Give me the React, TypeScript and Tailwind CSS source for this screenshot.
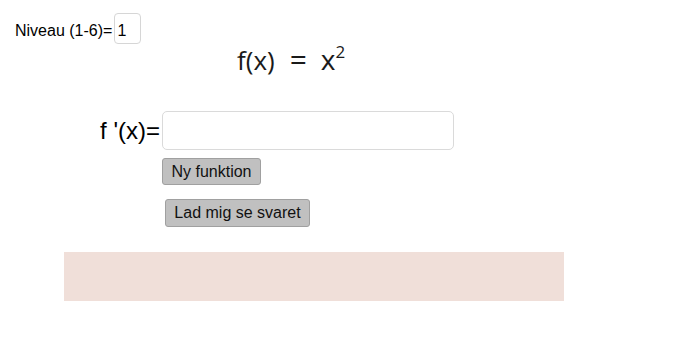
import React from 'react';

// Øvelse: differentiér f(x) og skriv svaret
export default function App() {
  return (
    <div className="w-[700px] h-[350px] overflow-hidden bg-white text-black font-['Liberation_Sans',Arial,sans-serif]">
      {/* niveau */}
      <div className="mt-[13px] h-[31px] flex items-baseline pl-[15px] text-[16px] leading-[18px]">
        <span>Niveau (1-6)=</span>
        <div className="ml-[2px] h-[31px] w-[27px] border border-[#d6d6d6] rounded-[4px] pt-[8px] px-[2px]">1</div>
      </div>

      {/* funktion */}
      <div className="h-[30px] pl-[237px] text-[26px] leading-[30px] whitespace-nowrap font-['Open_Sans','DejaVu_Sans',sans-serif] font-normal text-[#1a1a1a]">
        <span>f(x)</span>
        <span className="inline-block ml-[15px] mr-[14px] text-[30px] leading-[30px]">=</span>
        <span className="text-[28px]">x</span>
        <span className="relative -top-[12px] text-[17px]">2</span>
      </div>

      {/* svar */}
      <div className="mt-[37px] h-[39px] flex items-center">
        <div className="w-[162px] pr-[2px] text-right text-[24px] leading-[28px]">f '(x)=</div>
        <div className="h-[39px] w-[292px] border border-[#dadada] rounded-[5px] bg-white" />
      </div>

      <div className="mt-[8px] pl-[162px]">
        <button className="h-[27px] w-[99px] bg-[#c0c0c0] border border-[#a0a0a0] rounded-[3px] text-[16px] leading-[18px] text-[#111]">
          Ny funktion
        </button>
      </div>

      <div className="mt-[14px] pl-[165px]">
        <button className="h-[28px] w-[145px] bg-[#c0c0c0] border border-[#a0a0a0] rounded-[3px] text-[16px] leading-[18px] text-[#111]">
          Lad mig se svaret
        </button>
      </div>

      <div className="mt-[25px] ml-[64px] w-[500px] h-[49px] bg-[#f0dfd9]" />
    </div>
  );
}
